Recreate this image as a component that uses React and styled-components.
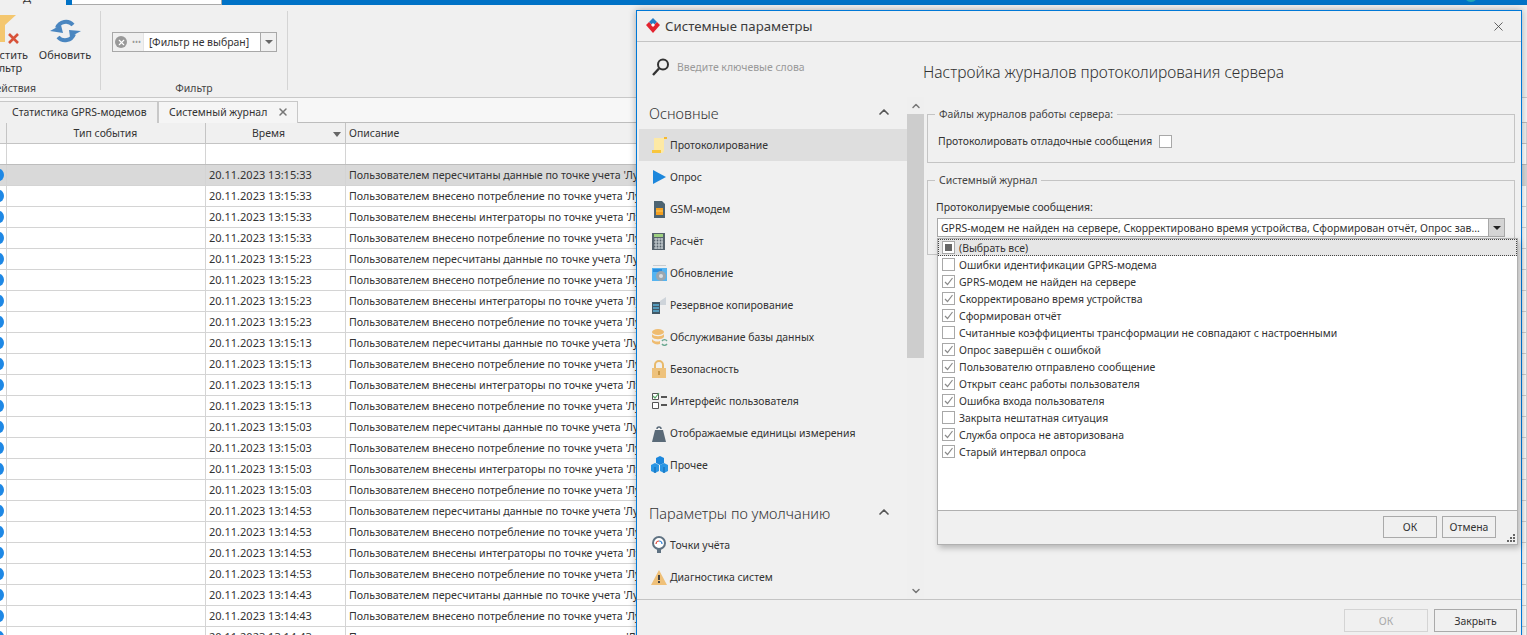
import React from 'react'
import styled, { createGlobalStyle } from 'styled-components'
import { ChevronUp, ChevronDown, X } from 'lucide-react'

const Global = createGlobalStyle`
  html, body { margin: 0; padding: 0; background: #f0f0f0; overflow: hidden; }
  body { font-family: "Noto Sans", "Open Sans", sans-serif; font-size: 10.45px; color: #333; }
  * { box-sizing: border-box; }
`

const Desk = styled.div`
  position: relative;
  width: 1527px;
  height: 635px;
  overflow: hidden;
  display: flex;
  flex-direction: column;
  background: #f0f0f0;
`

const TopBar = styled.div`
  height: 5px;
  flex: none;
  display: flex;
  background: #0072c6;
  overflow: hidden;
`
const TopTab = styled.div`
  width: 66px;
  margin-top: -2px;
  background: #f0f0f0;
  line-height: 0;
  padding-left: 23px;
  font-size: 11px;
`
const TopField = styled.div`
  width: 150px;
  margin-left: 6px;
  background: #fff;
  border-right: 1px solid #aaa;
  border-bottom: 1px solid #aaa;
`
const TopDot = styled.div`
  width: 14px;
  height: 14px;
  border-radius: 50%;
  background: #20a5b5;
  margin: -12px 0 0 1242px;
`

const Ribbon = styled.div`
  height: 93px;
  flex: none;
  display: flex;
  padding-top: 6px;
  border-bottom: 1px solid #c8c8c8;
`
const RibbonGroup = styled.div`
  width: ${p => p.$w}px;
  height: 79px;
  border-right: 1px solid #d4d4d4;
  display: flex;
  flex-direction: column;
`
const RibbonBody = styled.div`
  flex: 1;
  display: flex;
  padding-left: ${p => p.$pl || 0}px;
`
const RibbonLabel = styled.div`
  height: 15px;
  margin-bottom: -6px;
  margin-left: ${p => p.$ml || 0}px;
  width: ${p => (p.$w ? `${p.$w}px` : 'auto')};
  text-align: center;
  color: #444;
`
const RibbonButton = styled.div`
  width: ${p => p.$w}px;
  margin-left: ${p => p.$ml || 0}px;
  display: flex;
  flex-direction: column;
  align-items: center;
  text-align: center;
  font-size: 11px;
  line-height: 13px;
  color: #333;
  padding-top: 4px;
`
const RibbonIcon = styled.div`
  height: 31px;
  margin-bottom: 2px;
  display: flex;
  align-items: center;
`
const FilterCombo = styled.div`
  width: 165px;
  height: 20px;
  margin-top: 21px;
  border: 1px solid #a8a8a8;
  display: flex;
  align-items: center;
  background: #fff;
`
const ComboClear = styled.div`
  width: 31px;
  height: 18px;
  background: #f0f0f0;
  display: flex;
  align-items: center;
  padding-left: 2px;
  gap: 5px;
  color: #999;
  border-right: 1px solid #e4e4e4;
`
const ClearDot = styled.span`
  width: 12px;
  height: 12px;
  border-radius: 50%;
  background: #999;
  color: #fff;
  display: flex;
  align-items: center;
  justify-content: center;
`
const Dots = styled.span`
  font-size: 8px;
  line-height: 8px;
`
const ComboText = styled.div`
  flex: 1;
  padding-left: 5px;
  white-space: nowrap;
`
const ComboArrow = styled.div`
  width: 16px;
  height: 18px;
  background: #f0f0f0;
  border-left: 1px solid #a8a8a8;
  display: flex;
  align-items: center;
  justify-content: center;
`
const Caret = styled.span`
  width: 0;
  height: 0;
  border-left: 4px solid transparent;
  border-right: 4px solid transparent;
  border-top: 4px solid ${p => p.$color || '#666'};
`

const TabStrip = styled.div`
  height: 25px;
  flex: none;
  background: #f7f7f7;
  display: flex;
  align-items: flex-end;
  border-bottom: 1px solid #bdbdbd;
`
const Tab = styled.div`
  width: ${p => p.$w}px;
  height: 22px;
  display: flex;
  align-items: center;
  justify-content: space-between;
  padding: 0 8px 1px ${p => p.$pl}px;
  background: ${p => (p.$active ? '#f5f5f5' : '#f0f0f0')};
  border: 1px solid #c8c8c8;
  border-bottom: none;
  border-left: ${p => (p.$active ? '1px solid #c8c8c8' : 'none')};
  margin-bottom: -1px;
  white-space: nowrap;
`

const Grid = styled.div`
  flex: 1;
  background: #fff;
  overflow: hidden;
`
const Row = styled.div`
  display: grid;
  grid-template-columns: 6px 200px 140px 1fr;
  height: 21px;
  background: ${p => p.$bg || '#fff'};
  border-bottom: 1px solid ${p => p.$line || '#d4d4d4'};
`
const Cell = styled.div`
  display: flex;
  align-items: center;
  justify-content: ${p => (p.$center ? 'center' : 'flex-start')};
  padding: 0 3px 1px;
  border-right: 1px solid ${p => p.$line || '#d4d4d4'};
  white-space: nowrap;
  overflow: hidden;
  position: relative;
  color: #333;
`
const SortCell = styled(Cell)`
  padding-right: 17px;
`
const TimeCell = styled(Cell)`
  font-size: 11px;
`
const TextCell = styled(Cell)`
  font-size: 10.65px;
`
const EventDot = styled.span`
  flex: none;
  width: 10px;
  height: 12px;
  border-radius: 50%;
  background: #1e88e5;
  margin-left: -9px;
`
const SortCaret = styled.span`
  position: absolute;
  right: 4px;
  top: 9px;
  width: 0;
  height: 0;
  border-left: 4px solid transparent;
  border-right: 4px solid transparent;
  border-top: 5px solid #666;
`

const Dialog = styled.div`
  position: absolute;
  left: 636px;
  top: 10px;
  width: 886px;
  height: 630px;
  background: #f0f0f0;
  border: 1px solid #0078d7;
  border-bottom: none;
  box-shadow: 0 0 7px rgba(0, 0, 0, .3);
  display: flex;
  flex-direction: column;
`
const TitleBar = styled.div`
  height: 31px;
  flex: none;
  display: flex;
  align-items: center;
  padding: 0 15px 0 8px;
  gap: 4px;
  border-bottom: 1px solid #c4c4c4;
`
const TitleText = styled.div`
  flex: 1;
  font-size: 13.2px;
  color: #3c3c3c;
`
const Body = styled.div`
  height: 558px;
  flex: none;
  display: flex;
  border-bottom: 1px solid #c4c4c4;
`
const Side = styled.div`
  width: 287px;
  flex: none;
  display: flex;
  flex-direction: column;
`
const SearchRow = styled.div`
  height: 55px;
  flex: none;
  display: flex;
  align-items: center;
  padding: 0 0 6px 14px;
  gap: 6px;
  color: #999;
`
const SideScroll = styled.div`
  flex: 1;
  display: flex;
  min-height: 0;
`
const Nav = styled.div`
  width: 270px;
  padding-left: 2px;
`
const Section = styled.div`
  height: ${p => p.$h}px;
  padding: ${p => p.$pt}px 15px 0 10px;
  display: flex;
  justify-content: space-between;
  font-size: 14.5px;
  font-weight: 300;
  color: #333;
  line-height: 20px;
  svg { color: #555; margin-top: 1px; }
`
const NavItem = styled.div`
  height: 32px;
  display: flex;
  align-items: center;
  gap: 2px;
  padding: 0 0 1px 11px;
  background: ${p => (p.$active ? '#dedede' : 'transparent')};
  color: #333;
  white-space: nowrap;
`
const NavIcon = styled.svg`
  width: 18px;
  height: 18px;
  flex: none;
`
const Scrollbar = styled.div`
  width: 17px;
  background: #efefef;
  display: flex;
  flex-direction: column;
  align-items: center;
  color: #777;
`
const ScrollEnd = styled.div`
  height: 17px;
  flex: none;
  display: flex;
  align-items: center;
  justify-content: center;
`
const Thumb = styled.div`
  align-self: stretch;
  height: 244px;
  background: #cdcdcd;
`
const ScrollGap = styled.div`
  flex: 1;
`
const Main = styled.div`
  flex: 1;
  padding: 0 6px 0 3px;
`
const Heading = styled.div`
  height: 65px;
  margin-left: -4px;
  padding-top: 19px;
  font-size: 15.6px;
  font-weight: 300;
  color: #333;
  white-space: nowrap;
`
const Group = styled.fieldset`
  margin: 0 0 ${p => p.$mb || 0}px;
  padding: 0;
  height: ${p => p.$h}px;
  border: 1px solid #c4c4c4;
`
const Legend = styled.legend`
  margin-left: 7px;
  padding: 0 4px;
  line-height: 14px;
  color: #444;
`
const CheckLine = styled.div`
  display: flex;
  align-items: center;
  gap: 7px;
  padding: 13px 0 0 10px;
  color: #333;
`
const FieldLabel = styled.div`
  padding: 13px 0 4px 8px;
  line-height: 14px;
  color: #333;
`
const MultiCombo = styled.div`
  width: 568px;
  height: 19px;
  margin-left: 9px;
  background: #fff;
  border: 1px solid #a8a8a8;
  display: flex;
  align-items: center;
`
const MultiText = styled.div`
  flex: 1;
  padding-left: 3px;
  white-space: nowrap;
  overflow: hidden;
`
const MultiArrow = styled.div`
  width: 16px;
  height: 17px;
  background: #d4d4d4;
  border-left: 1px solid #a8a8a8;
  display: flex;
  align-items: center;
  justify-content: center;
`
const Footer = styled.div`
  flex: 1;
  display: flex;
  justify-content: flex-end;
  gap: 6px;
  padding: 9px 4px 0 0;
`
const Button = styled.div`
  width: ${p => p.$w}px;
  height: ${p => p.$h}px;
  border: 1px solid ${p => (p.disabled ? '#d4d4d4' : '#aaa')};
  color: ${p => (p.disabled ? '#aaa' : '#333')};
  display: flex;
  align-items: center;
  justify-content: center;
`

const Popup = styled.div`
  position: absolute;
  left: 937px;
  top: 238px;
  width: 581px;
  height: 307px;
  background: #fff;
  border: 1px solid #b0b0b0;
  box-shadow: 2px 3px 6px rgba(0, 0, 0, .25);
  display: flex;
  flex-direction: column;
`
const PopList = styled.div`
  flex: 1;
`
const PopItem = styled.div`
  height: 17px;
  display: flex;
  align-items: center;
  gap: 4px;
  padding-left: 4px;
  color: #333;
  background: ${p => (p.$focus ? '#e6e6e6' : 'transparent')};
  outline: ${p => (p.$focus ? '1px dotted #444' : 'none')};
  outline-offset: -1px;
`
const Box = styled.span`
  width: 13px;
  height: 13px;
  flex: none;
  border: 1px solid #a8a8a8;
  background: #fff;
  display: flex;
  align-items: center;
  justify-content: center;
`
const BoxFill = styled.span`
  width: 7px;
  height: 7px;
  background: #666;
`
const PopFooter = styled.div`
  height: 34px;
  flex: none;
  background: #f0f0f0;
  border-top: 1px solid #b0b0b0;
  display: flex;
  gap: 5px;
  padding: 5px 0 0 445px;
  position: relative;
`
const Grip = styled.svg`
  position: absolute;
  right: 1px;
  bottom: 1px;
  width: 9px;
  height: 9px;
`

const Tick = () => (
  <svg width="11" height="11" viewBox="0 0 11 11">
    <path d="M2 6l2.5 2.5L9.5 2" fill="none" stroke="#8a8a8a" strokeWidth="1.2" />
  </svg>
)

const icons = {
  log: <><path d="M4 2h11l1 1-2 1v10c0 2-1 3-2 3H2c1-1 2-1 2-3z" fill="#fde9a5" /><path d="M2 14h9v3H2z" fill="#f8c63e" /><path d="M14 1h3v2h-3z" fill="#f5b82e" /></>,
  poll: <path d="M3 2l13 7-13 7z" fill="#1c87dc" />,
  gsm: <><path d="M4 1h8l3 3v14H4z" fill="#4d6472" /><path d="M6 8h7v7H6z" fill="#f5a020" /><path d="M6 11h7" stroke="#ffd060" /></>,
  calc: <><path d="M2 1h13v17H2z" fill="#56626c" /><path d="M4 2h9v3H4z" fill="#9ed080" /><path d="M4 7h9M4 10h9M4 13h9M4 16h9M6 6v11M9 6v11M12 6v11" stroke="#c8d0d4" strokeWidth="1.2" /></>,
  update: <><path d="M2 4h15v13H2z" fill="#55b4f0" /><path d="M3 1h13v1H3z" fill="#c8ccd0" /><path d="M3 5h9v3H3z" fill="#2b8fe0" /><circle cx="11" cy="12" r="5" fill="#9aa6b0" /><circle cx="11" cy="12" r="2" fill="#d8dee2" /></>,
  backup: <><path d="M10 5l6-4v8h-6z" fill="#ced4da" /><path d="M2 6h8v12H2z" fill="#425866" /><path d="M3 9h6M3 12h6M3 15h6" stroke="#5cb0d8" strokeWidth="1.4" /></>,
  db: <><ellipse cx="8" cy="4" rx="6" ry="3" fill="#efbc70" /><path d="M2 6c2 3 10 3 12 0v3c-2 3-10 3-12 0zM2 11c2 3 6 3 8 2v3c-3 1-6 0-8-2z" fill="#efbc70" /><path d="M12 13a3 3 0 0 1 5 0M17 16a3 3 0 0 1-5 0" fill="none" stroke="#6aa890" strokeWidth="1.4" /></>,
  lock: <><path d="M5 8V5a4 4 0 0 1 8 0v3" fill="none" stroke="#e8b96a" strokeWidth="2" /><path d="M2 8h14v10H2z" fill="#eec27c" /><path d="M8 11h2v4H8z" fill="#c89848" /></>,
  ui: <><path d="M2.5 1.5h6v6h-6zM2.5 10.5h6v6h-6z" fill="#fff" stroke="#555" /><path d="M3 4l2 2 4-5" fill="none" stroke="#5aa868" strokeWidth="1.2" /><path d="M11 4h6v2h-6zM11 12h6v2h-6z" fill="#555" /></>,
  weight: <><path d="M5 6h8l3 12H2z" fill="#5a6a78" /><path d="M7 5a2 2 0 1 1 4 0" fill="none" stroke="#5a6a78" strokeWidth="1.5" /></>,
  misc: <><path d="M6 2l4-2 4 2v5l-4 2-4-2z" fill="#1c87dc" /><path d="M1 9l4-2 4 2v6l-4 2-4-2zM10 9l4-2 4 2v6l-4 2-4-2z" fill="#2a96e4" /><path d="M5 11v6M14 11v6" stroke="#0e64ae" /></>,
  point: <><circle cx="9" cy="7" r="6" fill="#fff" stroke="#5f7282" strokeWidth="2" /><path d="M6 8a3 3 0 0 1 3-3" fill="none" stroke="#e04d3c" strokeWidth="1.2" /><path d="M9 5a3 3 0 0 1 3 3" fill="none" stroke="#3a88d8" strokeWidth="1.2" /><path d="M7 13h4v4H7z" fill="#5f7282" /></>,
  warn: <><path d="M9 2l8 15H1z" fill="#efc078" /><path d="M8 7h2v5H8zM8 13h2v2H8z" fill="#444" /></>,
}

const MainItems = [
  ['log', 'Протоколирование'],
  ['poll', 'Опрос'],
  ['gsm', 'GSM-модем'],
  ['calc', 'Расчёт'],
  ['update', 'Обновление'],
  ['backup', 'Резервное копирование'],
  ['db', 'Обслуживание базы данных'],
  ['lock', 'Безопасность'],
  ['ui', 'Интерфейс пользователя'],
  ['weight', 'Отображаемые единицы измерения'],
  ['misc', 'Прочее'],
]
const DefaultItems = [
  ['point', 'Точки учёта'],
  ['warn', 'Диагностика систем'],
]

const Messages = [
  ['Ошибки идентификации GPRS-модема', false],
  ['GPRS-модем не найден на сервере', true],
  ['Скорректировано время устройства', true],
  ['Сформирован отчёт', true],
  ['Считанные коэффициенты трансформации не совпадают с настроенными', false],
  ['Опрос завершён с ошибкой', true],
  ['Пользователю отправлено сообщение', true],
  ['Открыт сеанс работы пользователя', true],
  ['Ошибка входа пользователя', true],
  ['Закрыта нештатная ситуация', false],
  ['Служба опроса не авторизована', true],
  ['Старый интервал опроса', true],
]

const Kinds = [
  'Пользователем пересчитаны данные по точке учета \'Лужская\'',
  'Пользователем внесено потребление по точке учета \'Лужская\'',
  'Пользователем внесены интеграторы по точке учета \'Лужская\'',
  'Пользователем внесено потребление по точке учета \'Лужская\'',
]
const Times = ['13:15:33', '13:15:23', '13:15:13', '13:15:03', '13:14:53', '13:14:43']
const Rows = Times.flatMap(t => Kinds.map(text => ({ time: `20.11.2023 ${t}`, text })))

const Logo = () => (
  <svg width="16" height="16" viewBox="0 0 16 16">
    <path d="M8 0l4 4-4 4-4-4z" fill="#2a7fc4" />
    <path d="M1 7l3-3 4 4 4-4 3 3-7 8z" fill="#e3232f" />
    <path d="M6 7l2-2 2 2-2 2z" fill="#fff" />
  </svg>
)

const Magnifier = () => (
  <svg width="20" height="20" viewBox="0 0 20 20">
    <circle cx="12" cy="7.5" r="5" fill="none" stroke="#333" strokeWidth="2" />
    <path d="M8 11.5L2 18" stroke="#333" strokeWidth="2.4" />
  </svg>
)

const FilterOff = () => (
  <svg width="54" height="32" viewBox="0 0 54 32">
    <path d="M4 0h36L29 10v17H15V10z" fill="#f4c76f" />
    <path d="M33 19l9 9M42 19l-9 9" stroke="#d8533a" strokeWidth="2.6" />
  </svg>
)

const Refresh = () => (
  <svg width="33" height="24" viewBox="0 0 33 24">
    <g fill="none" stroke="#4a86c0" strokeWidth="4">
      <path d="M8 9a9.5 9.5 0 0 1 16-3" />
      <path d="M25 15a9.5 9.5 0 0 1-16 3" />
    </g>
    <path d="M1 12L12 6l2 8zM32 12l-12-1 1 7z" fill="#4a86c0" />
  </svg>
)

const App = () => (
  <Desk>
    <Global />
    <TopBar>
      <TopTab>Д</TopTab>
      <TopField />
      <TopDot />
    </TopBar>
    <Ribbon>
      <RibbonGroup $w={101}>
        <RibbonBody>
          <RibbonButton $w={54} $ml={-24}>
            <RibbonIcon><FilterOff /></RibbonIcon>
            Очистить фильтр
          </RibbonButton>
          <RibbonButton $w={50} $ml={10}>
            <RibbonIcon><Refresh /></RibbonIcon>
            Обновить
          </RibbonButton>
        </RibbonBody>
        <RibbonLabel $ml={-54} $w={132}>Действия</RibbonLabel>
      </RibbonGroup>
      <RibbonGroup $w={187}>
        <RibbonBody $pl={11}>
          <FilterCombo>
            <ComboClear>
              <ClearDot><X size={9} strokeWidth={3} /></ClearDot>
              <Dots>•••</Dots>
            </ComboClear>
            <ComboText>[Фильтр не выбран]</ComboText>
            <ComboArrow><Caret /></ComboArrow>
          </FilterCombo>
        </RibbonBody>
        <RibbonLabel>Фильтр</RibbonLabel>
      </RibbonGroup>
    </Ribbon>
    <TabStrip>
      <Tab $w={158} $pl={12}>Статистика GPRS-модемов</Tab>
      <Tab $active $w={140} $pl={10}>
        Системный журнал
        <X size={12} strokeWidth={3} color="#777" />
      </Tab>
    </TabStrip>
    <Grid>
      <Row $bg="#f0f0f0" $line="#c4c4c4">
        <Cell $line="#c4c4c4" />
        <Cell $center $line="#c4c4c4">Тип события</Cell>
        <SortCell $center $line="#c4c4c4">Время<SortCaret /></SortCell>
        <Cell>Описание</Cell>
      </Row>
      <Row $line="#bdbdbd">
        <Cell /><Cell /><Cell /><Cell />
      </Row>
      {Rows.map((r, i) => (
        <Row key={i} $bg={i === 0 ? '#d9d9d9' : undefined}>
          <Cell><EventDot /></Cell>
          <Cell />
          <TimeCell>{r.time}</TimeCell>
          <TextCell>{r.text}</TextCell>
        </Row>
      ))}
    </Grid>

    <Dialog>
      <TitleBar>
        <Logo />
        <TitleText>Системные параметры</TitleText>
        <X size={15} strokeWidth={1.3} color="#444" />
      </TitleBar>
      <Body>
        <Side>
          <SearchRow>
            <Magnifier />
            Введите ключевые слова
          </SearchRow>
          <SideScroll>
            <Nav>
              <Section $h={32} $pt={6}>Основные<ChevronUp size={16} strokeWidth={2.5} /></Section>
              {MainItems.map(([icon, label], i) => (
                <NavItem key={label} $active={i === 0}>
                  <NavIcon viewBox="0 0 18 18">{icons[icon]}</NavIcon>
                  {label}
                </NavItem>
              ))}
              <Section $h={48} $pt={22}>Параметры по умолчанию<ChevronUp size={16} strokeWidth={2.5} /></Section>
              {DefaultItems.map(([icon, label]) => (
                <NavItem key={label}>
                  <NavIcon viewBox="0 0 18 18">{icons[icon]}</NavIcon>
                  {label}
                </NavItem>
              ))}
            </Nav>
            <Scrollbar>
              <ScrollEnd><ChevronUp size={12} strokeWidth={3} /></ScrollEnd>
              <Thumb />
              <ScrollGap />
              <ScrollEnd><ChevronDown size={12} strokeWidth={3} /></ScrollEnd>
            </Scrollbar>
          </SideScroll>
        </Side>
        <Main>
          <Heading>Настройка журналов протоколирования сервера</Heading>
          <Group $h={56} $mb={10}>
            <Legend>Файлы журналов работы сервера:</Legend>
            <CheckLine>
              Протоколировать отладочные сообщения
              <Box />
            </CheckLine>
          </Group>
          <Group $h={82}>
            <Legend>Системный журнал</Legend>
            <FieldLabel>Протоколируемые сообщения:</FieldLabel>
            <MultiCombo>
              <MultiText>GPRS-модем не найден на сервере, Скорректировано время устройства, Сформирован отчёт, Опрос зав...</MultiText>
              <MultiArrow><Caret $color="#222" /></MultiArrow>
            </MultiCombo>
          </Group>
        </Main>
      </Body>
      <Footer>
        <Button disabled $w={84} $h={23}>ОК</Button>
        <Button $w={83} $h={23}>Закрыть</Button>
      </Footer>
    </Dialog>

    <Popup>
      <PopList>
        <PopItem $focus><Box><BoxFill /></Box>(Выбрать все)</PopItem>
        {Messages.map(([label, on]) => (
          <PopItem key={label}>
            <Box>{on && <Tick />}</Box>
            {label}
          </PopItem>
        ))}
      </PopList>
      <PopFooter>
        <Button $w={54} $h={22}>ОК</Button>
        <Button $w={54} $h={22}>Отмена</Button>
        <Grip viewBox="0 0 9 9">
          <path d="M6 0h2v2H6zM3 3h2v2H3zM6 3h2v2H6zM0 6h2v2H0zM3 6h2v2H3zM6 6h2v2H6z" fill="#666" />
        </Grip>
      </PopFooter>
    </Popup>
  </Desk>
)

export default App
